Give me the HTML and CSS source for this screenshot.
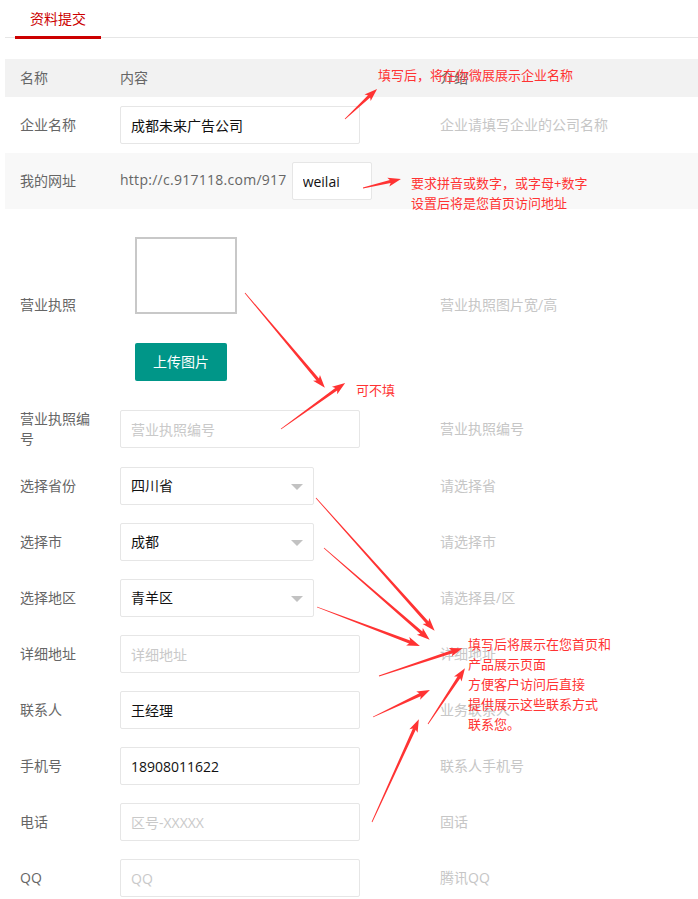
FILE: index.html
```html
<!DOCTYPE html>
<html lang="zh-CN">
<head>
<meta charset="utf-8">
<title>资料提交</title>
<link rel="stylesheet" href="styles.css">
</head>
<body>
<div class="wrap">
  <div class="tabs"><div class="tab">资料提交</div></div>
  <table class="form-table">
    <colgroup><col class="c1"><col class="c2"><col class="c3"></colgroup>
    <thead>
      <tr><th>名称</th><th>内容</th><th>介绍</th></tr>
    </thead>
    <tbody>
      <tr>
        <td class="lbl">企业名称</td>
        <td><input class="ipt" type="text" value="成都未来广告公司"></td>
        <td class="hint">企业请填写企业的公司名称</td>
      </tr>
      <tr class="hover">
        <td class="lbl">我的网址</td>
        <td class="nowrap"><span class="url">http://c.917118.com/917</span><input class="ipt short" type="text" value="weilai"></td>
        <td class="hint"></td>
      </tr>
      <tr>
        <td class="lbl">营业执照</td>
        <td>
          <div class="upload">
            <div class="pic"></div>
            <div class="btn">上传图片</div>
          </div>
        </td>
        <td class="hint">营业执照图片宽/高</td>
      </tr>
      <tr>
        <td class="lbl">营业执照编号</td>
        <td><input class="ipt" type="text" placeholder="营业执照编号"></td>
        <td class="hint">营业执照编号</td>
      </tr>
      <tr>
        <td class="lbl">选择省份</td>
        <td><div class="select">四川省<i class="caret"></i></div></td>
        <td class="hint">请选择省</td>
      </tr>
      <tr>
        <td class="lbl">选择市</td>
        <td><div class="select">成都<i class="caret"></i></div></td>
        <td class="hint">请选择市</td>
      </tr>
      <tr>
        <td class="lbl">选择地区</td>
        <td><div class="select">青羊区<i class="caret"></i></div></td>
        <td class="hint">请选择县/区</td>
      </tr>
      <tr>
        <td class="lbl">详细地址</td>
        <td><input class="ipt" type="text" placeholder="详细地址"></td>
        <td class="hint">详细地址</td>
      </tr>
      <tr>
        <td class="lbl">联系人</td>
        <td><input class="ipt" type="text" value="王经理"></td>
        <td class="hint">业务联系人</td>
      </tr>
      <tr>
        <td class="lbl">手机号</td>
        <td><input class="ipt" type="text" value="18908011622"></td>
        <td class="hint">联系人手机号</td>
      </tr>
      <tr>
        <td class="lbl">电话</td>
        <td><input class="ipt" type="text" placeholder="区号-XXXXX"></td>
        <td class="hint">固话</td>
      </tr>
      <tr>
        <td class="lbl">QQ</td>
        <td><input class="ipt" type="text" placeholder="QQ"></td>
        <td class="hint">腾讯QQ</td>
      </tr>
    </tbody>
  </table>
</div>

<svg class="arrows" width="698" height="899" viewBox="0 0 698 899" xmlns="http://www.w3.org/2000/svg">
  <g fill="#ff3333">
    <path transform="translate(345,119) rotate(-43.2)" d="M0,-0.4 L33,-1.6 L31,-4.5 L44,0 L31,4.5 L33,1.6 L0,0.4Z"/>
    <path transform="translate(363,188) rotate(-13.3)" d="M0,-0.4 L28,-1.6 L26,-4.5 L39,0 L26,4.5 L28,1.6 L0,0.4Z"/>
    <path transform="translate(245,293) rotate(49.9)" d="M0,-0.4 L113,-1.6 L111,-4.5 L124,0 L111,4.5 L113,1.6 L0,0.4Z"/>
    <path transform="translate(281,429) rotate(-35.7)" d="M0,-0.4 L68,-1.6 L66,-4.5 L79,0 L66,4.5 L68,1.6 L0,0.4Z"/>
    <path transform="translate(316,498) rotate(48.2)" d="M0,-0.4 L167,-1.6 L165,-4.5 L178,0 L165,4.5 L167,1.6 L0,0.4Z"/>
    <path transform="translate(324,548) rotate(41.0)" d="M0,-0.4 L129,-1.6 L127,-4.5 L140,0 L127,4.5 L129,1.6 L0,0.4Z"/>
    <path transform="translate(317,607) rotate(20.7)" d="M0,-0.4 L99,-1.6 L97,-4.5 L110,0 L97,4.5 L99,1.6 L0,0.4Z"/>
    <path transform="translate(379,676) rotate(-18.4)" d="M0,-0.4 L77,-1.6 L75,-4.5 L88,0 L75,4.5 L77,1.6 L0,0.4Z"/>
    <path transform="translate(373,717) rotate(-25.3)" d="M0,-0.4 L52,-1.6 L50,-4.5 L63,0 L50,4.5 L52,1.6 L0,0.4Z"/>
    <path transform="translate(428,724) rotate(-56.5)" d="M0,-0.4 L56,-1.6 L54,-4.5 L67,0 L54,4.5 L56,1.6 L0,0.4Z"/>
    <path transform="translate(372,822) rotate(-65.5)" d="M0,-0.4 L102,-1.6 L100,-4.5 L113,0 L100,4.5 L102,1.6 L0,0.4Z"/>
  </g>
</svg>

<div class="note n1">填写后，将在你微展展示企业名称</div>
<div class="note n2">要求拼音或数字，或字母+数字<br>设置后将是您首页访问地址</div>
<div class="note n3">可不填</div>
<div class="note n4">填写后将展示在您首页和<br>产品展示页面<br>方便客户访问后直接<br>提供展示这些联系方式<br>联系您。</div>
</body>
</html>
```

FILE: styles.css
```css
html, body {
  margin: 0;
  padding: 0;
  background: #fff;
}
body {
  font-family: "Open Sans", "Noto Sans CJK SC", sans-serif;
  font-size: 14px;
  color: #666;
  width: 698px;
  height: 899px;
  overflow: hidden;
  position: relative;
}
.wrap {
  padding-left: 5px;
}
.tabs {
  height: 37px;
  border-bottom: 1px solid #e6e6e6;
  padding-left: 10px;
}
.tab {
  width: 86px;
  height: 39px;
  box-sizing: border-box;
  line-height: 38px;
  text-align: center;
  color: #c00;
  border-bottom: 3px solid #c00;
}
.form-table {
  margin-top: 21px;
  width: 700px;
  border-collapse: collapse;
  border-spacing: 0;
  table-layout: fixed;
}
.c1 { width: 100px; }
.c2 { width: 320px; }
.form-table th,
.form-table td {
  padding: 9px 15px;
  line-height: 20px;
  text-align: left;
  font-weight: normal;
  vertical-align: middle;
}
.form-table thead tr {
  background: #f2f2f2;
}
.form-table tr.hover {
  background: #f8f8f8;
}
.lbl {
  color: #666;
}
.hint {
  color: #c6c6c6;
}
.nowrap {
  white-space: nowrap;
}
.url {
  color: #666;
  letter-spacing: 0.27px;
}
.ipt {
  display: block;
  box-sizing: border-box;
  width: 240px;
  height: 38px;
  margin: 0;
  padding: 0 10px;
  border: 1px solid #e6e6e6;
  border-radius: 2px;
  background: #fff;
  font-family: inherit;
  font-size: 14px;
  color: #111;
  outline: none;
}
.ipt::placeholder {
  color: #c9c9c9;
}
.ipt.short {
  display: inline-block;
  vertical-align: middle;
  width: 80px;
  margin-left: 5px;
}
.upload {
  padding: 19px 0 10px 15px;
}
.pic {
  width: 102px;
  height: 77px;
  box-sizing: border-box;
  border: 2px solid #c8c8c8;
  background: #fff;
}
.btn {
  margin-top: 29px;
  width: 92px;
  height: 38px;
  line-height: 38px;
  text-align: center;
  color: #fff;
  background: #009688;
  border-radius: 2px;
}
.select {
  position: relative;
  box-sizing: border-box;
  width: 194px;
  height: 38px;
  line-height: 36px;
  padding-left: 10px;
  border: 1px solid #e6e6e6;
  border-radius: 2px;
  background: #fff;
  color: #111;
}
.caret {
  position: absolute;
  right: 10px;
  top: 16px;
  width: 0;
  height: 0;
  border-left: 6px solid transparent;
  border-right: 6px solid transparent;
  border-top: 6px solid #c2c2c2;
}
.arrows {
  position: absolute;
  left: 0;
  top: 0;
  pointer-events: none;
}
.note {
  position: absolute;
  color: #ff3333;
  font-size: 13px;
  line-height: 20px;
  white-space: nowrap;
}
.n1 { left: 378px; top: 65px; }
.n2 { left: 411px; top: 173px; }
.n3 { left: 356px; top: 380px; }
.n4 { left: 468px; top: 634px; }
```
